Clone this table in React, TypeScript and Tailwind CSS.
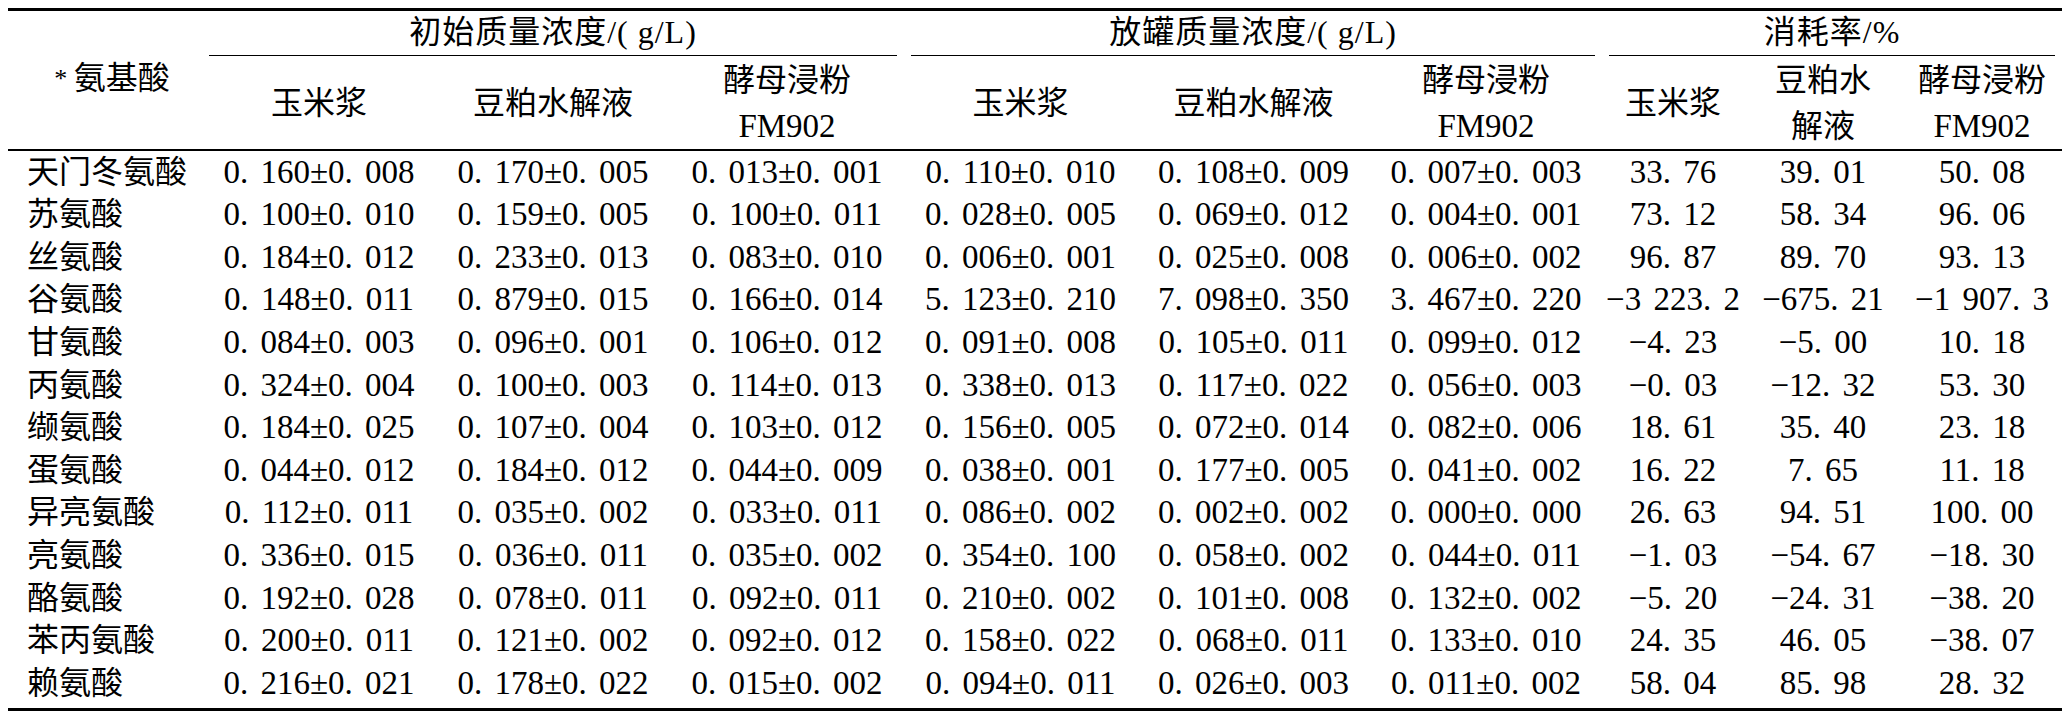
import React from "react";

type Row = { name: string; values: string[] };

const rows: Row[] = [
  { name: "天门冬氨酸", values: ["0.160±0.008", "0.170±0.005", "0.013±0.001", "0.110±0.010", "0.108±0.009", "0.007±0.003", "33.76", "39.01", "50.08"] },
  { name: "苏氨酸", values: ["0.100±0.010", "0.159±0.005", "0.100±0.011", "0.028±0.005", "0.069±0.012", "0.004±0.001", "73.12", "58.34", "96.06"] },
  { name: "丝氨酸", values: ["0.184±0.012", "0.233±0.013", "0.083±0.010", "0.006±0.001", "0.025±0.008", "0.006±0.002", "96.87", "89.70", "93.13"] },
  { name: "谷氨酸", values: ["0.148±0.011", "0.879±0.015", "0.166±0.014", "5.123±0.210", "7.098±0.350", "3.467±0.220", "−3 223.2", "−675.21", "−1 907.3"] },
  { name: "甘氨酸", values: ["0.084±0.003", "0.096±0.001", "0.106±0.012", "0.091±0.008", "0.105±0.011", "0.099±0.012", "−4.23", "−5.00", "10.18"] },
  { name: "丙氨酸", values: ["0.324±0.004", "0.100±0.003", "0.114±0.013", "0.338±0.013", "0.117±0.022", "0.056±0.003", "−0.03", "−12.32", "53.30"] },
  { name: "缬氨酸", values: ["0.184±0.025", "0.107±0.004", "0.103±0.012", "0.156±0.005", "0.072±0.014", "0.082±0.006", "18.61", "35.40", "23.18"] },
  { name: "蛋氨酸", values: ["0.044±0.012", "0.184±0.012", "0.044±0.009", "0.038±0.001", "0.177±0.005", "0.041±0.002", "16.22", "7.65", "11.18"] },
  { name: "异亮氨酸", values: ["0.112±0.011", "0.035±0.002", "0.033±0.011", "0.086±0.002", "0.002±0.002", "0.000±0.000", "26.63", "94.51", "100.00"] },
  { name: "亮氨酸", values: ["0.336±0.015", "0.036±0.011", "0.035±0.002", "0.354±0.100", "0.058±0.002", "0.044±0.011", "−1.03", "−54.67", "−18.30"] },
  { name: "酪氨酸", values: ["0.192±0.028", "0.078±0.011", "0.092±0.011", "0.210±0.002", "0.101±0.008", "0.132±0.002", "−5.20", "−24.31", "−38.20"] },
  { name: "苯丙氨酸", values: ["0.200±0.011", "0.121±0.002", "0.092±0.012", "0.158±0.022", "0.068±0.011", "0.133±0.010", "24.35", "46.05", "−38.07"] },
  { name: "赖氨酸", values: ["0.216±0.021", "0.178±0.022", "0.015±0.002", "0.094±0.011", "0.026±0.003", "0.011±0.002", "58.04", "85.98", "28.32"] },
];

// the journal typesets a gap after every decimal point
const spaced = (v: string) => v.replace(/\./g, ". ");

const GroupHead: React.FC<{ label: string }> = ({ label }) => (
  <th colSpan={3} className="p-0 font-normal">
    <div className="mx-[7px] flex h-[45px] items-center justify-center border-b border-black pb-[2px] whitespace-pre tracking-[1px]">
      {label}
    </div>
  </th>
);

const SubHead: React.FC<{ lines: string[] }> = ({ lines }) => (
  <th className="p-0 font-normal leading-[46px]">
    {lines.map((l) => (
      <div key={l} className={l === "FM902" ? "text-[33px]" : ""}>
        {l}
      </div>
    ))}
  </th>
);

const subHeads = [
  ["玉米浆"],
  ["豆粕水解液"],
  ["酵母浸粉", "FM902"],
];

export default function App() {
  return (
    <div className="min-h-screen bg-white pt-[8px] pl-[8px] text-black [font-family:Liberation_Serif,Noto_Sans_CJK_SC,serif] text-[32px] leading-[42px]">
      <table className="w-[2054px] table-fixed border-collapse border-t-[3px] border-black">
        <colgroup>
          <col className="w-[194px]" />
          <col className="w-[234px]" />
          <col className="w-[234px]" />
          <col className="w-[234px]" />
          <col className="w-[233px]" />
          <col className="w-[233px]" />
          <col className="w-[232px]" />
          <col className="w-[142px]" />
          <col className="w-[158px]" />
          <col className="w-[160px]" />
        </colgroup>
        <thead>
          <tr>
            <th rowSpan={2} className="p-0 pl-[14px] pb-[4px] font-normal whitespace-nowrap">
              <span className="text-[26px] align-[2px]">*&nbsp;</span>氨基酸
            </th>
            <GroupHead label="初始质量浓度/( g/L)" />
            <GroupHead label="放罐质量浓度/( g/L)" />
            <GroupHead label="消耗率/%" />
          </tr>
          <tr className="h-[94px]">
            {subHeads.map((s, i) => (
              <SubHead key={"a" + i} lines={s} />
            ))}
            {subHeads.map((s, i) => (
              <SubHead key={"b" + i} lines={s} />
            ))}
            <SubHead lines={["玉米浆"]} />
            <SubHead lines={["豆粕水", "解液"]} />
            <SubHead lines={["酵母浸粉", "FM902"]} />
          </tr>
        </thead>
        <tbody className="border-t-2 border-b-[3px] border-black">
          {rows.map((r, idx) => (
            <tr key={r.name} className={idx === rows.length - 1 ? "h-[48px] align-top" : "h-[42.6px]"}>
              <td className="p-0 pl-[19px] whitespace-nowrap">{r.name}</td>
              {r.values.map((v, j) => (
                <td key={j} className="p-0 text-center whitespace-nowrap text-[33px] [word-spacing:4px]">
                  {spaced(v)}
                </td>
              ))}
            </tr>
          ))}
        </tbody>
      </table>
    </div>
  );
}
